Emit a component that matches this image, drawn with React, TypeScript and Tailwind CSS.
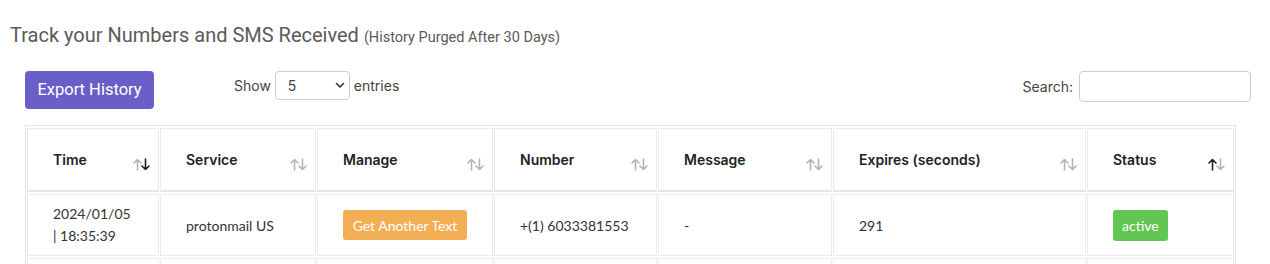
import React from 'react';

type Row = {
  date: string;
  time: string;
  service: string;
  number: string;
  message: string;
  expires: string;
  status: string;
};

const rows: Row[] = [
  { date: '2024/01/05', time: '| 18:35:39', service: 'protonmail US', number: '+(1) 6033381553', message: '-', expires: '291', status: 'active' },
  { date: '2024/01/05', time: '| 18:20:11', service: 'protonmail US', number: '+(1) 6033381553', message: '-', expires: '0', status: 'expired' },
];

const columns = [
  { label: 'Time', width: 'w-[132px]', sort: 'desc' },
  { label: 'Service', width: 'w-[156px]', sort: '' },
  { label: 'Manage', width: 'w-[176px]', sort: '' },
  { label: 'Number', width: 'w-[163px]', sort: '' },
  { label: 'Message', width: 'w-[174px]', sort: '' },
  { label: 'Expires (seconds)', width: 'w-[253px]', sort: '' },
  { label: 'Status', width: 'w-[147px]', sort: 'asc' },
];

function SortIcon({ dir }: { dir: string }) {
  const up = dir === 'asc' ? '#222' : '#b5b5b5';
  const down = dir === 'desc' ? '#222' : '#b5b5b5';
  return (
    <svg width="17" height="13" viewBox="0 0 17 13" className="shrink-0">
      <g fill="none" strokeWidth="1.6" strokeLinecap="round" strokeLinejoin="round">
        <path d="M4.5 12V1.5M1 5l3.5-3.5L8 5" stroke={up} />
        <path d="M12.5 1v10.5M9 8l3.5 3.5L16 8" stroke={down} />
      </g>
    </svg>
  );
}

export default function App() {
  return (
    <div className="min-h-screen bg-white text-[#333] font-['Inter',sans-serif]">
      <div className="pt-[22px] pl-[10px]">
        <h2 className="text-[20px] leading-[26px] text-[#5a5a5a] font-normal font-['Roboto',sans-serif]">
          Track your Numbers and SMS Received{' '}
          <span className="text-[14.5px]">(History Purged After 30 Days)</span>
        </h2>
      </div>

      <div className="ml-[25px] w-[1226px] mt-[20px] flex items-start justify-between">
        <div className="flex items-start">
          <button className="h-[38px] w-[129px] rounded-[4px] bg-[#6a5fc8] text-white text-[16.5px] font-['Roboto',sans-serif]">
            Export History
          </button>
          <label className="ml-[80px] flex items-center gap-[4px] text-[14px] text-[#444]">
            Show
            <div className="relative h-[29px] w-[75px] rounded-[4px] border border-[#ccc] bg-white flex items-center pl-[12px]">
              <span>5</span>
              <svg width="10" height="7" viewBox="0 0 10 7" className="absolute right-[4px] top-[10px]">
                <path d="M1.5 1.5L5 5l3.5-3.5" fill="none" stroke="#333" strokeWidth="1.6" strokeLinecap="round" strokeLinejoin="round" />
              </svg>
            </div>
            entries
          </label>
        </div>
        <label className="flex items-center gap-[6px] text-[14px] text-[#444]">
          Search:
          <input className="h-[31px] w-[172px] rounded-[4px] border border-[#ccc] outline-none px-2" />
        </label>
      </div>

      <table className="ml-[25px] mt-[16px] w-[1211px] table-fixed border border-[#e4e5e8] border-separate [border-spacing:1px_2px]">
        <thead>
          <tr>
            {columns.map((c) => (
              <th
                key={c.label}
                className={`${c.width} h-[64px] border border-[#ececef] border-b-[2px] border-b-[#e4e5e8] pl-[25px] pr-[8px] text-left font-semibold text-[14px] text-[#222]`}
              >
                <div className="flex items-center justify-between">
                  <span>{c.label}</span>
                  <span className="translate-y-[5px]">
                    <SortIcon dir={c.sort} />
                  </span>
                </div>
              </th>
            ))}
          </tr>
        </thead>
        <tbody className="font-['Lato',sans-serif] text-[14px] text-[#333]">
          {rows.map((r, i) => (
            <tr key={i}>
              <td className="h-[62px] border border-[#ececef] pl-[25px] leading-[22px]">
                {r.date}
                <br />
                {r.time}
              </td>
              <td className="border border-[#ececef] pl-[25px]">{r.service}</td>
              <td className="border border-[#ececef] pl-[25px]">
                <button className="h-[30px] w-[124px] rounded-[3px] bg-[#f2ae55] text-white text-[14px]">
                  Get Another Text
                </button>
              </td>
              <td className="border border-[#ececef] pl-[25px]">{r.number}</td>
              <td className="border border-[#ececef] pl-[25px]">{r.message}</td>
              <td className="border border-[#ececef] pl-[25px]">{r.expires}</td>
              <td className="border border-[#ececef] pl-[25px]">
                <span className={`inline-flex h-[31px] items-center px-[9px] rounded-[3px] text-white ${r.status === 'active' ? 'bg-[#62c655]' : 'bg-[#999]'}`}>
                  {r.status}
                </span>
              </td>
            </tr>
          ))}
        </tbody>
      </table>
    </div>
  );
}
